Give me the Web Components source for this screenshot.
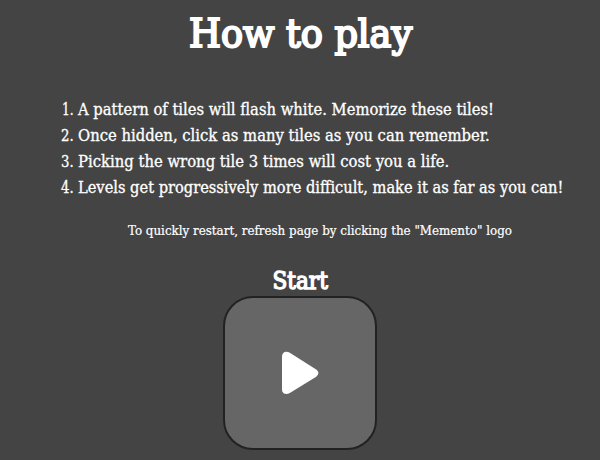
<!DOCTYPE html>
<html lang="en">
<head>
<meta charset="utf-8">
<title>How to play</title>
<style>
html, body { margin: 0; height: 100%; background: #444; overflow: hidden; }
body { color: #fff; font-family: "Roboto Slab", "DejaVu Serif Condensed", "DejaVu Serif", serif; }
</style>
</head>
<body>
<how-to-play></how-to-play>
<script>
// One line of text, condensed horizontally to the width given in its attribute.
class FitLine extends HTMLElement {
  constructor() {
    super();
    this.attachShadow({ mode: 'open' }).innerHTML = `
      <style>
        :host { display: block; white-space: nowrap; }
        span { display: inline-block; transform-origin: 0 50%; }
      </style><span><slot></slot></span>`;
  }
  connectedCallback() {
    const width = Number(this.getAttribute('width'));
    const span = this.shadowRoot.querySelector('span');
    this.style.width = width + 'px';
    span.style.transform = `scaleX(${width / span.offsetWidth})`;
  }
}
customElements.define('fit-line', FitLine);

class RuleItem extends HTMLElement {
  constructor() {
    super();
    this.attachShadow({ mode: 'open' }).innerHTML = `
      <style>
        :host { display: grid; grid-template-columns: 13px auto; column-gap: 4px; justify-content: start; height: 26px; line-height: 26px; font-size: 15.9px; -webkit-text-stroke: 0.3px #fff; }
        .n { display: flex; justify-content: flex-end; }
      </style><div class="n"><fit-line></fit-line></div><slot></slot>`;
  }
  connectedCallback() {
    const n = this.getAttribute('n');
    const line = this.shadowRoot.querySelector('fit-line');
    line.textContent = n + '.';
    line.setAttribute('width', n === '1' ? 12 : 13);
    line.connectedCallback();
  }
}
customElements.define('rule-item', RuleItem);

class StartButton extends HTMLElement {
  constructor() {
    super();
    this.attachShadow({ mode: 'open' }).innerHTML = `
      <style>
        :host { display: grid; place-items: center; box-sizing: border-box; width: 154px; height: 154px; border: 2px solid #222; border-radius: 30px; background: #666; }
        svg { display: block; }
      </style>
      <svg width="38" height="44" viewBox="0 0 38 44" role="img" aria-label="Play">
        <path fill="#fff" d="M1 5.5C1 1 5 -.5 8.8 1.7L34.8 18.2C38.2 20.4 38.2 23.8 34.8 26L8.8 42.1C5 44.4 1 42.6 1 38.5Z"/>
      </svg>`;
  }
}
customElements.define('start-button', StartButton);

class HowToPlay extends HTMLElement {
  constructor() {
    super();
    this.attachShadow({ mode: 'open' }).innerHTML = `
      <style>
        :host { display: flex; flex-direction: column; align-items: center; height: 460px; }
        h1, h2, p { margin: 0; font-weight: normal; }
        h1 { font-size: 40px; line-height: 54px; padding-top: 6px; -webkit-text-stroke: 2px #fff; }
        .rules { align-self: stretch; margin-top: 37px; padding-left: 61px; }
        p { font-size: 12.8px; line-height: 18px; margin-top: 21px; padding-left: 40px; -webkit-text-stroke: 0.2px #fff; }
        h2 { font-size: 24px; line-height: 32px; margin-top: 25px; margin-bottom: -1px; -webkit-text-stroke: 1.3px #fff; }
      </style>
      <h1><fit-line width="223">How to play</fit-line></h1>
      <div class="rules">
        <rule-item n="1"><fit-line width="416">A pattern of tiles will flash white. Memorize these tiles!</fit-line></rule-item>
        <rule-item n="2"><fit-line width="412">Once hidden, click as many tiles as you can remember.</fit-line></rule-item>
        <rule-item n="3"><fit-line width="371">Picking the wrong tile 3 times will cost you a life.</fit-line></rule-item>
        <rule-item n="4"><fit-line width="485">Levels get progressively more difficult, make it as far as you can!</fit-line></rule-item>
      </div>
      <p><fit-line width="384">To quickly restart, refresh page by clicking the "Memento" logo</fit-line></p>
      <h2><fit-line width="55">Start</fit-line></h2>
      <start-button></start-button>`;
  }
}
customElements.define('how-to-play', HowToPlay);
</script>
</body>
</html>
